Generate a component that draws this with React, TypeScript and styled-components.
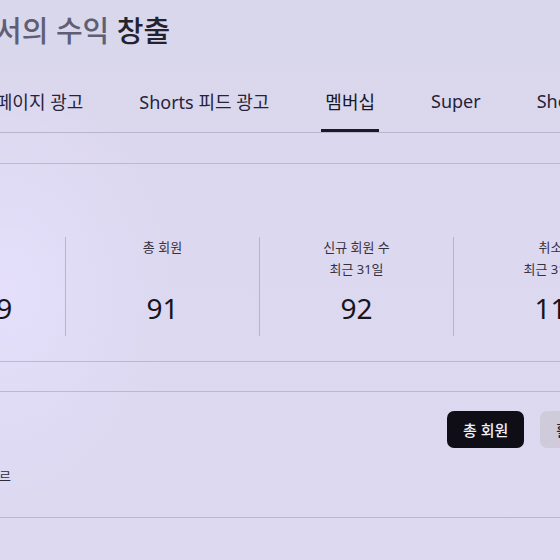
import React from "react";
import styled, { createGlobalStyle } from "styled-components";

const GlobalStyle = createGlobalStyle`
  html, body {
    margin: 0;
    padding: 0;
    background: #dcd8ef;
  }
  body {
    font-family: "Noto Sans", "Noto Sans CJK KR", sans-serif;
    color: #1d1b2c;
    overflow: hidden;
  }
`;

const Page = styled.div`
  width: 560px;
  height: 560px;
  overflow: hidden;
  background:
    radial-gradient(ellipse 160px 220px at 10px 290px, rgba(232, 226, 255, 0.7), rgba(232, 226, 255, 0) 100%),
    linear-gradient(180deg, #d9d7eb 0%, #dcd8f0 40%, #ddd9f1 100%);
`;

const Title = styled.h1`
  margin: 0 0 0 -85px;
  padding-top: 11px;
  font-size: 29px;
  line-height: 40px;
  font-weight: 500;
  white-space: nowrap;
  color: #24222f;
`;

const Faded = styled.span`
  color: #5f5e75;
`;

const TabBar = styled.nav`
  margin-top: 21px;
  margin-left: -46px;
  display: flex;
  gap: 48px;
  border-bottom: 1px solid #bab5cd;
  white-space: nowrap;
`;

const Tab = styled.div<{ $active?: boolean }>`
  height: 57px;
  padding: 0 4px;
  display: flex;
  align-items: center;
  font-size: 18px;
  color: ${(p) => (p.$active ? "#181726" : "#25233a")};
  border-bottom: 3px solid ${(p) => (p.$active ? "#1a1928" : "transparent")};
  flex: none;
`;

const StatsCard = styled.section`
  margin-top: 30px;
  border-top: 1px solid #bdb8cf;
  border-bottom: 1px solid #bdb8cf;
  padding: 73px 0 25px;
  overflow: hidden;
`;

const StatsRow = styled.div`
  display: flex;
  margin-left: -129px;
`;

const Stat = styled.div<{ $divider?: boolean }>`
  flex: 0 0 194px;
  height: 99px;
  display: grid;
  grid-template-rows: 42px auto;
  justify-items: center;
  align-content: start;
  border-left: 1px solid ${(p) => (p.$divider ? "#b9b4cb" : "transparent")};
  box-sizing: border-box;
  white-space: nowrap;
`;

const LabelBlock = styled.div`
  display: flex;
  flex-direction: column;
  align-items: center;
  gap: 2px;
`;

const Label = styled.div`
  font-size: 13px;
  line-height: 20px;
  color: #34323f;
`;

const Value = styled.div`
  margin-top: 11px;
  font-size: 28px;
  line-height: 36px;
  color: #161520;
`;

const Section = styled.section`
  margin-top: 29px;
  border-top: 1px solid #bdb8cf;
  border-bottom: 1px solid #bdb8cf;
  padding: 19px 0 31px;
  overflow: hidden;
`;

const Toolbar = styled.div`
  display: flex;
  justify-content: flex-start;
  gap: 16px;
  padding-left: 447px;
  white-space: nowrap;
`;

const Chip = styled.button<{ $active?: boolean }>`
  flex: none;
  height: 37px;
  padding: 0 16px;
  border: none;
  border-radius: 7px;
  font-family: "Noto Sans", "Noto Sans CJK KR", sans-serif;
  font-size: 15px;
  font-weight: 500;
  background: ${(p) => (p.$active ? "#0f0e17" : "#cfcbda")};
  color: ${(p) => (p.$active ? "#f1f0f6" : "#25232f")};
`;

const Caption = styled.div`
  margin-top: 18px;
  margin-left: -1px;
  font-size: 13px;
  line-height: 20px;
  color: #2e2c3a;
`;

const stats = [
  { label: "전체 회원", sub: "최근 31일", value: "12,829" },
  { label: "총 회원", value: "91" },
  { label: "신규 회원 수", sub: "최근 31일", value: "92" },
  { label: "취소", sub: "최근 31일", value: "11" },
];

const tabs = ["시청 페이지 광고", "Shorts 피드 광고", "멤버십", "Super", "Shopping"];

export default function App() {
  return (
    <Page>
      <GlobalStyle />
      <Title>
        <Faded>채널에서의 수익</Faded> 창출
      </Title>
      <TabBar>
        {tabs.map((t) => (
          <Tab key={t} $active={t === "멤버십"}>
            {t}
          </Tab>
        ))}
      </TabBar>
      <StatsCard>
        <StatsRow>
          {stats.map((s, i) => (
            <Stat key={s.label} $divider={i > 0}>
              <LabelBlock>
                <Label>{s.label}</Label>
                {s.sub && <Label>{s.sub}</Label>}
              </LabelBlock>
              <Value>{s.value}</Value>
            </Stat>
          ))}
        </StatsRow>
      </StatsCard>
      <Section>
        <Toolbar>
          <Chip $active>총 회원</Chip>
          <Chip>활성 회원</Chip>
        </Toolbar>
        <Caption>르</Caption>
      </Section>
    </Page>
  );
}
